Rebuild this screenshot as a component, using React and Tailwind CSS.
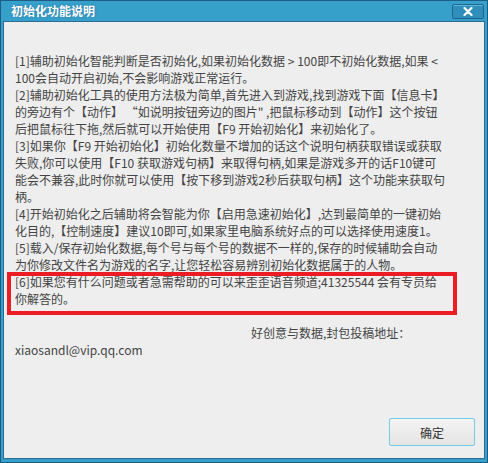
import React from 'react'

const lines = [
  '[1]辅助初始化智能判断是否初始化,如果初始化数据 > 100即不初始化数据,如果 <',
  '100会自动开启初始,不会影响游戏正常运行。',
  '[2]辅助初始化工具的使用方法极为简单,首先进入到游戏,找到游戏下面【信息卡】',
  '的旁边有个【动作】 “如说明按钮旁边的图片" ,把鼠标移动到【动作】这个按钮',
  '后把鼠标往下拖,然后就可以开始使用【F9 开始初始化】来初始化了。',
  '[3]如果你【F9 开始初始化】初始化数量不增加的话这个说明句柄获取错误或获取',
  '失败,你可以使用【F10 获取游戏句柄】来取得句柄,如果是游戏多开的话F10键可',
  '能会不兼容,此时你就可以使用【按下移到游戏2秒后获取句柄】这个功能来获取句',
  '柄。',
  '[4]开始初始化之后辅助将会智能为你【启用急速初始化】,达到最简单的一键初始',
  '化目的,【控制速度】建议10即可,如果家里电脑系统好点的可以选择使用速度1。',
  '[5]载入/保存初始化数据,每个号与每个号的数据不一样的,保存的时候辅助会自动',
  '为你修改文件名为游戏的名字,让您轻松容易辨别初始化数据属于的人物。',
  '[6]如果您有什么问题或者急需帮助的可以来歪歪语音频道;41325544 会有专员给',
  '你解答的。',
]

const font = { fontFamily: '"Noto Sans CJK SC", "Microsoft YaHei", sans-serif' }

export default function App() {
  return (
    <div
      className="w-[488px] h-[463px] flex flex-col bg-[#369fca] border border-[#1d5c84] px-[2px] pb-[3px]"
      style={font}
    >
      {/* Title bar */}
      <div className="h-[20px] flex items-center justify-between pl-[8px] pr-[1px]">
        <span className="text-[12px] font-bold text-white leading-none [text-shadow:0_0_2px_#2a6f98]">
          初始化功能说明
        </span>
        <button className="w-[32px] h-[15px] flex items-center justify-center bg-[#2f8fba] border border-[#1f6690] rounded-[2px] shadow-[inset_0_1px_0_#5cb6dc]">
          <svg width="10" height="9" viewBox="0 0 10 9">
            <path d="M1.5 1 L8.5 8 M8.5 1 L1.5 8" stroke="white" strokeWidth="2.2" strokeLinecap="round" />
          </svg>
        </button>
      </div>

      {/* Content */}
      <div className="relative flex-1 flex flex-col bg-[#eeeeee] border border-[#2a6e96] pt-[30px] pl-[11px] text-[12px] leading-[17px] text-[#444]">
        {lines.map((l, i) => (
          <div key={i} className="whitespace-pre">{l}</div>
        ))}
        <div className="h-[17px]" />
        <div className="whitespace-pre pl-[236px]">好创意与数据,封包投稿地址：</div>
        <div className="whitespace-pre">xiaosandl@vip.qq.com</div>

        <div className="flex-1" />
        <div className="flex justify-end pr-[9px] pb-[12px]">
          <button className="w-[86px] h-[28px] flex items-center justify-center text-[12px] text-[#333] border border-[#6fcfe6] rounded-[2px] bg-gradient-to-b from-[#f4f4f4] to-[#e4e4e4]">
            确定
          </button>
        </div>

        {/* annotation box */}
        <div className="absolute left-[3px] top-[250px] w-[450px] h-[43px] border-[4px] border-[#ec1c24]" />
      </div>
    </div>
  )
}
